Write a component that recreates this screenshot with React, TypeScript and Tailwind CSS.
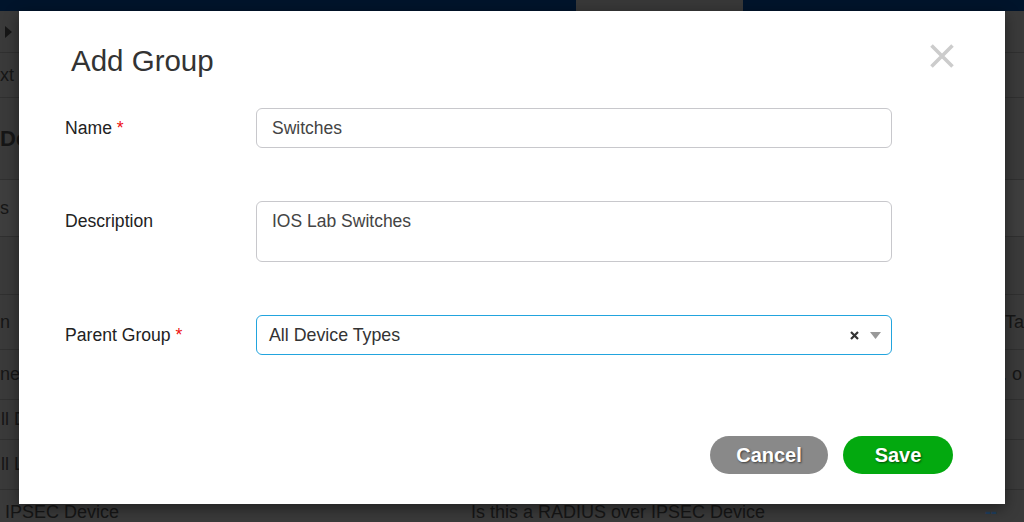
export default function App() {
  const row = "flex items-center justify-between text-[18px] text-[#161616] border-b border-[#303030]";
  return (
    <div className="relative w-[1024px] h-[522px] overflow-hidden bg-[#3a3a3a] font-['Liberation_Sans',Arial,sans-serif]">
      {/* background page (dimmed) */}
      <div className="h-[11px] bg-[#00142b] flex">
        <div className="ml-[576px] w-[167px] bg-[#383838]" />
      </div>
      <div className={`${row} h-[42px]`}>
        <svg width="8" height="12" viewBox="0 0 8 12" className="ml-[5px]"><path d="M0 0 L7 6 L0 12 Z" fill="#161616" /></svg>
        <span />
      </div>
      <div className={`${row} h-[45px]`}>
        <span>xt I</span>
        <span />
      </div>
      <div className={`${row} h-[82px]`}>
        <span className="font-bold text-[22px]">De</span>
        <span />
      </div>
      <div className={`${row} h-[57px] bg-[#3e3e3e]`}>
        <span>s</span>
        <span />
      </div>
      <div className={`${row} h-[58px]`}>
        <span />
        <span />
      </div>
      <div className={`${row} h-[55px]`}>
        <span>n</span>
        <span>Ta</span>
      </div>
      <div className={`${row} h-[50px]`}>
        <span>ne</span>
        <span className="pr-[2px]">. o</span>
      </div>
      <div className={`${row} h-[40px]`}>
        <span className="pl-[1px]">ll D</span>
        <span />
      </div>
      <div className={`${row} h-[50px]`}>
        <span className="pl-[1px]">ll L</span>
        <span />
      </div>
      <div className="flex items-end h-[32px] text-[18px] leading-[20px] text-[#161616] bg-[#3a3a3a]">
        <span className="pl-[5px] w-[471px]">IPSEC Device</span>
        <span className="w-[514px]">Is this a RADIUS over IPSEC Device</span>
        <span className="text-[#1f3f5f] font-bold">--</span>
      </div>

      {/* modal */}
      <div className="absolute left-[19px] top-[11px] w-[986px] h-[493px] bg-white shadow-[0_4px_14px_rgba(0,0,0,0.45)]">
        <div className="flex items-start justify-between pl-[52px] pr-[51px] pt-[32px]">
          <h2 className="text-[29.5px] leading-[36px] text-[#333333]">Add Group</h2>
          <svg width="24" height="24" viewBox="0 0 24 24" className="mt-[1px]">
            <path d="M1.5 1.5 L22.5 22.5 M22.5 1.5 L1.5 22.5" stroke="#cccccc" strokeWidth="3.6" />
          </svg>
        </div>

        <div className="mt-[29px] flex flex-col">
          <div className="flex items-center h-[40px]">
            <div className="w-[237px] pl-[46px] text-[17.6px] leading-[20px] text-[#222222]">
              Name <span className="text-[#ee1111]">*</span>
            </div>
            <div className="w-[636px] h-[40px] border border-[#c8c8cc] rounded-[6px] flex items-center px-[15px] text-[17.5px] text-[#444444]">
              Switches
            </div>
          </div>

          <div className="flex items-start mt-[53px]">
            <div className="w-[237px] pl-[46px] pt-[10px] text-[17.6px] leading-[20px] text-[#222222]">
              Description
            </div>
            <div className="w-[636px] h-[61px] border border-[#c8c8cc] rounded-[6px] px-[15px] pt-[9px] text-[17.5px] leading-[20px] text-[#444444]">
              IOS Lab Switches
            </div>
          </div>

          <div className="flex items-center h-[40px] mt-[53px]">
            <div className="w-[237px] pl-[46px] text-[17.6px] leading-[20px] text-[#222222]">
              Parent Group <span className="text-[#ee1111]">*</span>
            </div>
            <div className="w-[636px] h-[40px] border-[1.5px] border-[#22a4de] rounded-[6px] flex items-center pl-[12px] pr-[10px] text-[17.8px] text-[#333333]">
              <span className="flex-1">All Device Types</span>
              <svg width="9" height="9" viewBox="0 0 9 9">
                <path d="M1 1 L8 8 M8 1 L1 8" stroke="#333333" strokeWidth="2.2" />
              </svg>
              <svg width="11" height="7" viewBox="0 0 11 7" className="ml-[11px]">
                <path d="M0 0 L11 0 L5.5 7 Z" fill="#999999" />
              </svg>
            </div>
          </div>
        </div>

        <div className="flex justify-end gap-[15px] pr-[52px] mt-[81px]">
          <button className="w-[118px] h-[38px] rounded-full bg-[#898989] text-white font-bold text-[20px] [text-shadow:1px_1px_2px_rgba(0,0,0,0.55)]">
            Cancel
          </button>
          <button className="w-[110px] h-[38px] rounded-full bg-[#03a90f] text-white font-bold text-[20px] [text-shadow:1px_1px_2px_rgba(0,0,0,0.55)]">
            Save
          </button>
        </div>
      </div>
    </div>
  );
}
